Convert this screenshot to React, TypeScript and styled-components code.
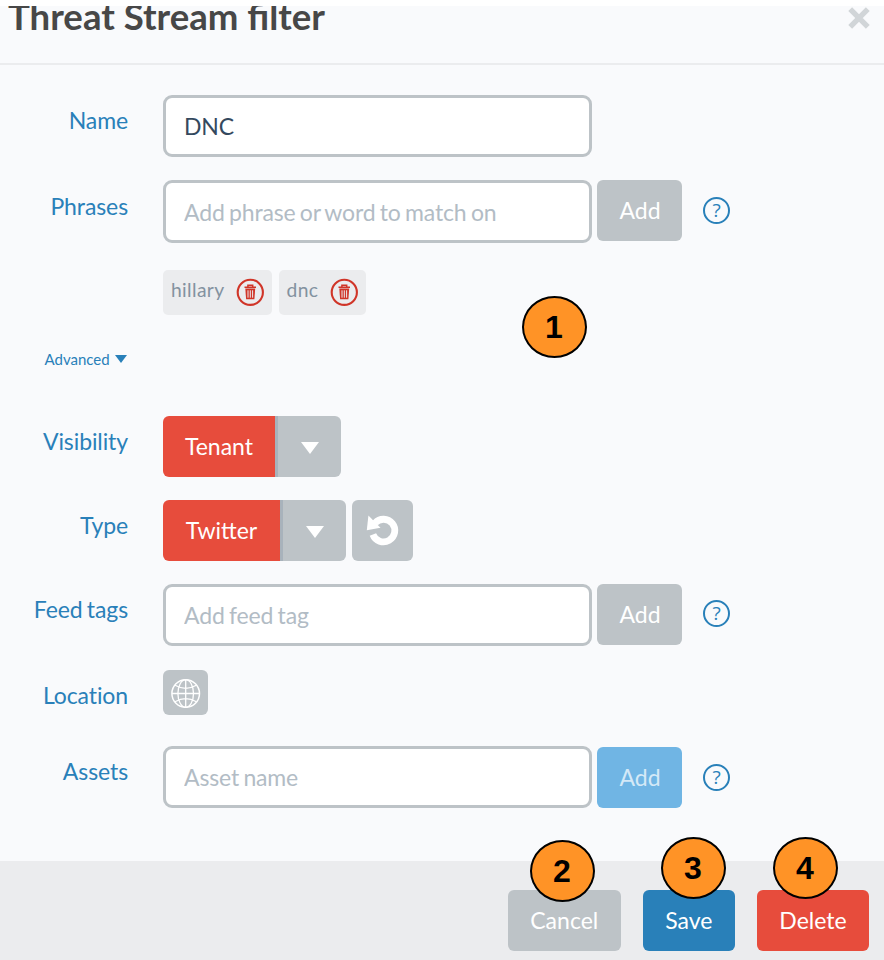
import React from 'react';
import styled, { createGlobalStyle } from 'styled-components';

const GlobalStyle = createGlobalStyle`
  *, *::before, *::after { box-sizing: border-box; }
  body { margin: 0; background: #fff; font-family: Lato, sans-serif; }
  button, input { font-family: inherit; margin: 0; }
`;

const colors = {
  blue: '#2980b9',
  paleBlue: '#70b5e4',
  red: '#e74c3c',
  darkRed: '#d03528',
  gray: '#bdc3c7',
  footer: '#ebecee',
  panel: '#f9fafc',
};

const Page = styled.div`
  position: relative;
  width: 884px;
  height: 960px;
  padding-top: 6px;
  overflow: hidden;
`;

const Dialog = styled.section`
  display: flex;
  flex-direction: column;
  height: 954px;
  overflow: hidden;
  background: ${colors.panel};
`;

const Header = styled.header`
  display: flex;
  flex: none;
  justify-content: space-between;
  height: 59px;
  padding: 0 13px 0 8px;
  border-bottom: 2px solid #ebecee;
`;

const Title = styled.h1`
  margin: -12px 0 0;
  font-size: 36.6px;
  line-height: 44px;
  font-weight: 700;
  white-space: nowrap;
  color: #474747;
`;

const CloseButton = styled.button`
  display: block;
  width: 24px;
  height: 24px;
  padding: 0;
  border: 0;
  background: none;
`;

const Form = styled.form`
  flex: 1;
`;

const Row = styled.div<{ $gap: number; $height: number }>`
  display: grid;
  grid-template-columns: 128px 1fr;
  column-gap: 35px;
  height: ${p => p.$height}px;
  margin-top: ${p => p.$gap}px;
`;

const Label = styled.label<{ $top?: number }>`
  padding-top: ${p => p.$top ?? 11}px;
  font-size: 23px;
  line-height: 28px;
  letter-spacing: -0.1px;
  word-spacing: -1.6px;
  text-align: right;
  white-space: nowrap;
  color: ${colors.blue};
`;

const Controls = styled.div`
  display: flex;
  align-items: flex-start;
`;

const TextInput = styled.input<{ $height?: number }>`
  width: 429px;
  height: ${p => p.$height ?? 62}px;
  padding: ${p => (p.$height ? 1 : 0)}px 18px 0;
  border: 3px solid ${colors.gray};
  border-radius: 9px;
  outline: 0;
  background: #fff;
  font-size: 23px;
  letter-spacing: -0.15px;
  word-spacing: -1.4px;
  color: #34495e;
  &::placeholder { color: #b2bcc5; opacity: 1; }
`;

const Button = styled.button<{ $bg: string; $width: number; $color?: string }>`
  width: ${p => p.$width}px;
  height: 61px;
  padding: 0;
  border: 0;
  border-radius: 6px;
  background: ${p => p.$bg};
  font-size: 23px;
  line-height: 61px;
  text-align: center;
  color: ${p => p.$color ?? '#fff'};
`;

const AddButton = styled(Button)<{ $drop?: number }>`
  margin: ${p => p.$drop ?? 0}px 0 0 5px;
  padding-left: 1px;
`;

const HelpButton = styled.button<{ $top: number }>`
  width: 27px;
  height: 27px;
  margin: ${p => p.$top}px 0 0 21px;
  padding: 0;
  border: 2px solid ${colors.blue};
  border-radius: 50%;
  background: none;
  font-family: "Open Sans", sans-serif;
  font-size: 19px;
  line-height: 23px;
  text-align: center;
  color: ${colors.blue};
`;

const Chips = styled.div`
  display: flex;
  gap: 6.5px;
  height: 45px;
  margin: 27px 0 0 163px;
`;

const Chip = styled.div<{ $width: number }>`
  display: flex;
  justify-content: space-between;
  width: ${p => p.$width}px;
  padding: 8px 8px 0;
  border-radius: 5px;
  background: ${colors.footer};
  font-size: 19.3px;
  line-height: 24px;
  letter-spacing: 0.35px;
  color: #8392a0;
`;

const Advanced = styled.div`
  display: flex;
  align-items: center;
  gap: 5px;
  height: 20px;
  margin: 34px 0 0 44.5px;
  font-size: 15px;
  color: ${colors.blue};
`;

const Split = styled.div`
  display: flex;
  height: 61px;
  border-radius: 6px;
  overflow: hidden;
`;

const SplitMain = styled(Button)`
  border-radius: 0;
`;

const SplitToggle = styled.button`
  display: flex;
  align-items: center;
  justify-content: center;
  width: 66px;
  padding: 3px 0 0;
  border: 0;
  border-left: 3px solid #a8b2bb;
  background: ${colors.gray};
`;

const IconButton = styled.button<{ $size: number; $left?: number }>`
  display: flex;
  align-items: center;
  justify-content: center;
  width: ${p => p.$size}px;
  height: ${p => p.$size}px;
  margin-left: ${p => p.$left ?? 0}px;
  padding: 0;
  border: 0;
  border-radius: 6px;
  background: ${colors.gray};
`;

const Footer = styled.footer`
  display: flex;
  flex: none;
  justify-content: flex-end;
  gap: 22.5px;
  height: 99px;
  padding: 29px 15px 0 0;
  background: ${colors.footer};
`;

const Marker = styled.span<{ $x: number; $y: number }>`
  position: absolute;
  left: ${p => p.$x}px;
  top: ${p => p.$y}px;
  width: 65px;
  height: 62px;
  padding-right: 1px;
  border: 2px solid #000;
  border-radius: 50%;
  background: #ff9326;
  font: 700 32px/58px "Liberation Sans", Arial, sans-serif;
  text-align: center;
  color: #000;
`;

const Caret = ({ color = '#fff', width = 18, height = 12 }) => (
  <svg width={width} height={height} viewBox="0 0 18 12" preserveAspectRatio="none">
    <path d="M0 0H18L9 12Z" fill={color} />
  </svg>
);

const TrashIcon = () => (
  <svg width="28" height="28" viewBox="0 0 28 28">
    <circle cx="14.3" cy="14.3" r="12.6" fill="none" stroke={colors.darkRed} strokeWidth="2.1" />
    <path d="M8.5 9.2H20M11.9 8.7V7.2H16.7V8.7" fill="none" stroke={colors.darkRed} strokeWidth="1.5" />
    <path d="M9.3 10.6H19.2L18.4 21.3H10.1Z" fill={colors.darkRed} />
    <path d="M12 12.3V19.7M14.3 12.3V19.7M16.6 12.3V19.7" stroke="#ebecee" strokeWidth="1" />
  </svg>
);

const UndoIcon = () => (
  <svg width="34" height="34" viewBox="0 0 34 34">
    <path d="M9.1 9A11.3 11.3 0 1 1 6.9 20.5" fill="none" stroke="#fff" strokeWidth="6.8" />
    <path d="M2.4 1.5L0.8 16.3L14.5 13.8Z" fill="#fff" />
  </svg>
);

const GlobeIcon = () => (
  <svg width="30" height="30" viewBox="0 0 30 30" fill="none" stroke="#fff" strokeWidth="1.3">
    <circle cx="14.7" cy="15.5" r="13.8" strokeWidth="1.5" />
    <ellipse cx="14.7" cy="15.5" rx="7.8" ry="13.8" />
    <path d="M14.7 2V29.5M1 15.5H28.5M4 7.3Q14.7 13.3 25.4 7.3M4 23.7Q14.7 17.7 25.4 23.7" />
  </svg>
);

const CloseIcon = () => (
  <svg width="24" height="24" viewBox="0 0 24 24">
    <path d="M3.2 3.2L20.8 20.8M20.8 3.2L3.2 20.8" stroke="#d1d5d8" strokeWidth="5.4" />
  </svg>
);

export default function App() {
  return (
    <>
      <GlobalStyle />
      <Page>
        <Dialog>
          <Header>
            <Title>Threat Stream filter</Title>
            <CloseButton type="button" aria-label="Close"><CloseIcon /></CloseButton>
          </Header>
          <Form>
            <Row $gap={30} $height={62}>
              <Label>Name</Label>
              <Controls><TextInput defaultValue="DNC" /></Controls>
            </Row>
            <Row $gap={23} $height={63}>
              <Label $top={12}>Phrases</Label>
              <Controls>
                <TextInput $height={63} placeholder="Add phrase or word to match on" />
                <AddButton type="button" $bg={colors.gray} $width={85}>Add</AddButton>
                <HelpButton type="button" $top={17}>?</HelpButton>
              </Controls>
            </Row>
            <Chips>
              <Chip $width={109}>hillary<TrashIcon /></Chip>
              <Chip $width={87}>dnc<TrashIcon /></Chip>
            </Chips>
            <Advanced>Advanced<Caret color={colors.blue} width={12} height={8} /></Advanced>
            <Row $gap={47} $height={62}>
              <Label>Visibility</Label>
              <Controls>
                <Split>
                  <SplitMain type="button" $bg={colors.red} $width={112}>Tenant</SplitMain>
                  <SplitToggle type="button" aria-label="Choose visibility"><Caret /></SplitToggle>
                </Split>
              </Controls>
            </Row>
            <Row $gap={22} $height={62}>
              <Label>Type</Label>
              <Controls>
                <Split>
                  <SplitMain type="button" $bg={colors.red} $width={117}>Twitter</SplitMain>
                  <SplitToggle type="button" aria-label="Choose type"><Caret /></SplitToggle>
                </Split>
                <IconButton type="button" aria-label="Reset" $size={61} $left={6}><UndoIcon /></IconButton>
              </Controls>
            </Row>
            <Row $gap={22} $height={62}>
              <Label>Feed tags</Label>
              <Controls>
                <TextInput placeholder="Add feed tag" />
                <AddButton type="button" $bg={colors.gray} $width={85}>Add</AddButton>
                <HelpButton type="button" $top={16}>?</HelpButton>
              </Controls>
            </Row>
            <Row $gap={24} $height={45}>
              <Label>Location</Label>
              <Controls>
                <IconButton type="button" aria-label="Pick location" $size={45}><GlobeIcon /></IconButton>
              </Controls>
            </Row>
            <Row $gap={31} $height={62}>
              <Label>Assets</Label>
              <Controls>
                <TextInput placeholder="Asset name" />
                <AddButton type="button" $bg={colors.paleBlue} $color="#d4e9f7" $width={85} $drop={1}>Add</AddButton>
                <HelpButton type="button" $top={18}>?</HelpButton>
              </Controls>
            </Row>
          </Form>
          <Footer>
            <Button type="button" $bg={colors.gray} $width={112.5}>Cancel</Button>
            <Button type="button" $bg={colors.blue} $width={91.5}>Save</Button>
            <Button type="button" $bg={colors.red} $width={112}>Delete</Button>
          </Footer>
        </Dialog>
        <Marker $x={522} $y={296}>1</Marker>
        <Marker $x={530} $y={840}>2</Marker>
        <Marker $x={661} $y={837}>3</Marker>
        <Marker $x={773} $y={837}>4</Marker>
      </Page>
    </>
  );
}
